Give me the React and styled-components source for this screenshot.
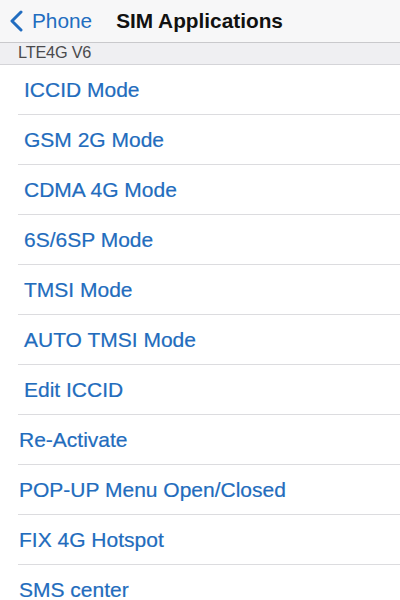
import React from 'react'
import styled, { createGlobalStyle } from 'styled-components'

const GlobalStyle = createGlobalStyle`
  body {
    margin: 0;
    background: #ffffff;
    font-family: "Liberation Sans", Arial, sans-serif;
  }
`

const Screen = styled.div`
  width: 400px;
  height: 600px;
  overflow: hidden;
  display: flex;
  flex-direction: column;
  background: #ffffff;
`

const NavBar = styled.div`
  height: 42px;
  flex-shrink: 0;
  display: flex;
  align-items: center;
  background: #f7f7f8;
  border-bottom: 1px solid #c9c9cc;
  padding-left: 9px;
`

const Back = styled.div`
  display: flex;
  align-items: center;
  gap: 9px;
  color: #226dc0;
  font-size: 20.8px;
`

const Title = styled.div`
  margin-left: 24px;
  font-size: 20.8px;
  font-weight: bold;
  color: #111111;
`

const SectionHeader = styled.div`
  height: 20px;
  flex-shrink: 0;
  background: #efeff2;
  border-bottom: 1px solid #d4d4d8;
  padding-left: 18px;
  padding-top: 1px;
  font-size: 16.3px;
  line-height: 16px;
  color: #4a4a4d;
  letter-spacing: -0.2px;
`

const List = styled.div`
  display: flex;
  flex-direction: column;
`

const Row = styled.div`
  height: 49px;
  flex-shrink: 0;
  margin-left: 18px;
  border-bottom: 1px solid #dcdcdf;
  display: flex;
  align-items: center;
  padding-left: ${({ $indent }) => $indent}px;
  font-size: 21px;
  color: #226cbd;
  -webkit-text-stroke: 0.2px #226cbd;
`

const items = [
  ['ICCID Mode', 6],
  ['GSM 2G Mode', 6],
  ['CDMA 4G Mode', 6],
  ['6S/6SP Mode', 6],
  ['TMSI Mode', 6],
  ['AUTO TMSI Mode', 6],
  ['Edit ICCID', 6],
  ['Re-Activate', 1],
  ['POP-UP Menu Open/Closed', 1],
  ['FIX 4G Hotspot', 1],
  ['SMS center', 1],
]

const Chevron = () => (
  <svg width="14" height="22" viewBox="0 0 14 22">
    <path d="M12 2 L3 11 L12 20" fill="none" stroke="#226dc0" strokeWidth="3" strokeLinecap="round" strokeLinejoin="round" />
  </svg>
)

export default function App() {
  return (
    <Screen>
      <GlobalStyle />
      <NavBar>
        <Back>
          <Chevron />
          Phone
        </Back>
        <Title>SIM Applications</Title>
      </NavBar>
      <SectionHeader>LTE4G V6</SectionHeader>
      <List>
        {items.map(([label, indent]) => (
          <Row key={label} $indent={indent}>{label}</Row>
        ))}
      </List>
    </Screen>
  )
}
